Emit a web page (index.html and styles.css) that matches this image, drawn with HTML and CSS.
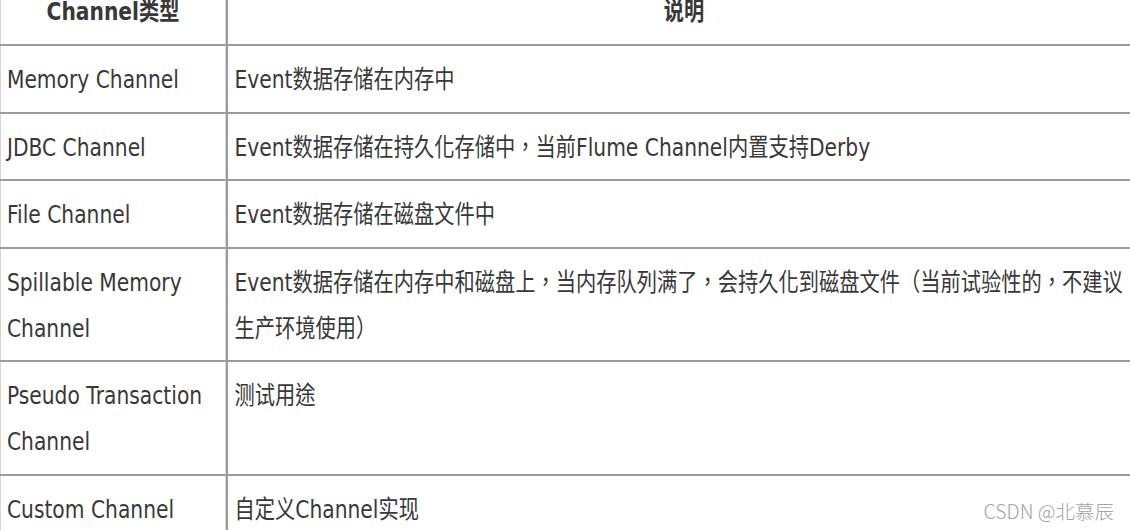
FILE: index.html
```html
<!DOCTYPE html>
<html lang="zh-CN">
<head>
  <meta charset="UTF-8">
  <meta name="viewport" content="width=device-width, initial-scale=1.0">
  <title>Flume Channel类型</title>
  <link rel="stylesheet" href="styles.css">
</head>
<body>
  <div class="sheet">
    <table class="channels">
      <colgroup><col class="col-type"><col class="col-desc"></colgroup>
      <thead>
        <tr><th>Channel类型</th><th>说明</th></tr>
      </thead>
      <tbody>
        <tr><td>Memory Channel</td><td>Event数据存储在内存中</td></tr>
        <tr><td>JDBC Channel</td><td>Event数据存储在持久化存储中，当前Flume Channel内置支持Derby</td></tr>
        <tr><td>File Channel</td><td>Event数据存储在磁盘文件中</td></tr>
        <tr><td>Spillable Memory Channel</td><td class="nowrap">Event数据存储在内存中和磁盘上，当内存队列满了，会持久化到磁盘文件（当前试验性的，不建议<br>生产环境使用）</td></tr>
        <tr><td>Pseudo Transaction Channel</td><td>测试用途</td></tr>
        <tr><td>Custom Channel</td><td>自定义Channel实现</td></tr>
      </tbody>
    </table>
  </div>
  <div class="watermark">CSDN @北慕辰</div>
</body>
</html>
```

FILE: styles.css
```css
:root {
  --line: #9c9c9c;
  --text: #383838;
  --mark: #a3a3a3;
}
html, body { margin:0; padding:0; background:#fff; }
body { position:relative; width:1130px; height:530px; overflow:hidden; font-family:'DejaVu Sans','Noto Sans CJK TC',sans-serif; color:var(--text); }

/* the source image is squeezed horizontally, so the sheet is too */
.sheet { width:1410px; margin:-22px 0 0 -2px; transform:scaleX(0.81); transform-origin:0 0; }

/* centred full-width punctuation, as in the source */
.channels { width:100%; table-layout:fixed; border-collapse:separate; border-spacing:0; font-size:25px; line-height:46px; font-feature-settings:"locl" 0; }
.col-type { width:281px; }
.channels th, .channels td { border-left:3px solid var(--line); border-bottom:2px solid var(--line); padding:11px 8px 8.5px; vertical-align:top; text-align:left; }
.channels th { text-align:center; font-weight:bold; padding-bottom:9px; }
.channels td.nowrap { white-space:nowrap; }

.watermark { position:absolute; right:16px; bottom:5px; font-family:'Noto Sans CJK SC',sans-serif; font-size:19.5px; font-weight:300; color:var(--mark); }
```
